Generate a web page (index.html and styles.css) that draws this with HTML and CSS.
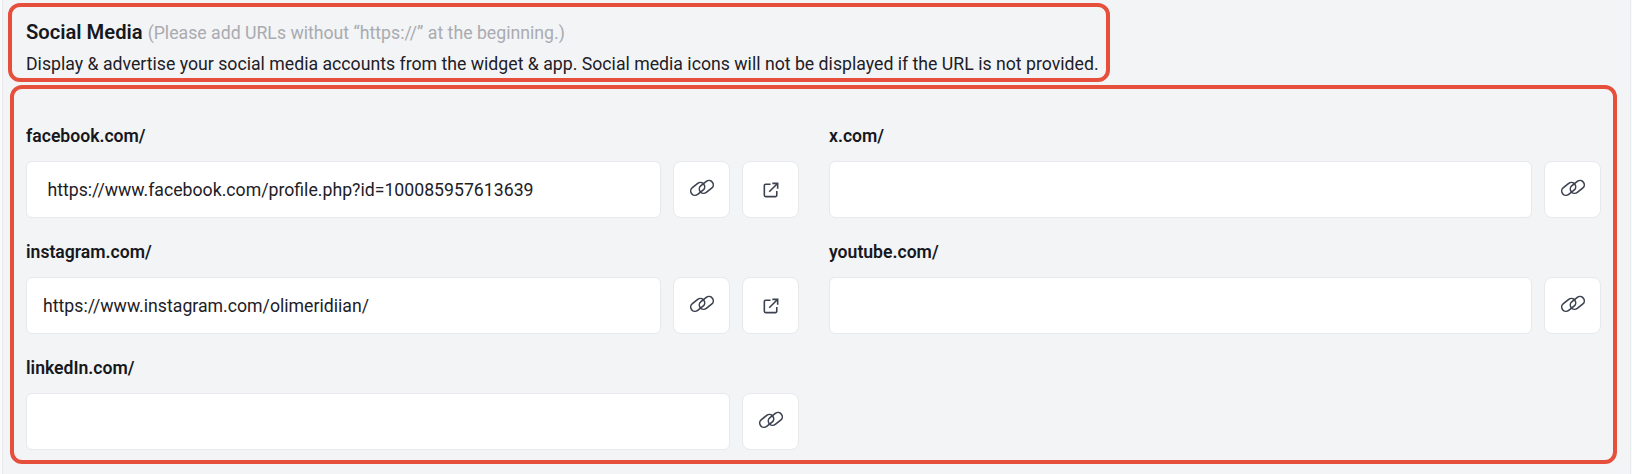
FILE: index.html
```html
<!DOCTYPE html>
<html lang="en">
<head>
  <meta charset="UTF-8">
  <meta name="viewport" content="width=device-width, initial-scale=1.0">
  <title>Social Media</title>
  <link rel="stylesheet" href="styles.css">
</head>
<body>
  <svg class="defs" width="0" height="0" aria-hidden="true">
    <symbol id="icon-link" viewBox="0 0 26 20">
      <g fill="none" stroke="currentColor" stroke-width="1.6">
        <rect x="1" y="6.6" width="15.4" height="8.6" rx="4.3" transform="rotate(-38 8.7 10.9)"/>
        <rect x="9.6" y="4.6" width="15.4" height="8.6" rx="4.3" transform="rotate(-38 17.3 8.9)"/>
      </g>
    </symbol>
    <symbol id="icon-open" viewBox="0 0 18 18">
      <g fill="none" stroke="currentColor" stroke-width="1.8">
        <path d="M8.5 2.5H3a1.5 1.5 0 0 0-1.5 1.5v11A1.5 1.5 0 0 0 3 16.500h11a1.500 1.500 0 0 0 1.500-1.500V10"/>
        <path d="M7 11 16 2M10.500 1.500h6v6"/>
      </g>
    </symbol>
  </svg>

  <div class="page">
    <div class="head">
      <h2>Social Media <span>(Please add URLs without “https://” at the beginning.)</span></h2>
      <p>Display &amp; advertise your social media accounts from the widget &amp; app. Social media icons will not be displayed if the URL is not provided.</p>
    </div>

    <div class="fields">
      <div class="field">
        <label>facebook.com/</label>
        <div class="row">
          <input type="text" value=" https://www.facebook.com/profile.php?id=100085957613639">
          <button class="btn"><svg class="ico-link"><use href="#icon-link"/></svg></button>
          <button class="btn"><svg class="ico-open"><use href="#icon-open"/></svg></button>
        </div>
      </div>
      <div class="field">
        <label>x.com/</label>
        <div class="row">
          <input type="text">
          <button class="btn"><svg class="ico-link"><use href="#icon-link"/></svg></button>
        </div>
      </div>
      <div class="field">
        <label>instagram.com/</label>
        <div class="row">
          <input type="text" value="https://www.instagram.com/olimeridiian/">
          <button class="btn"><svg class="ico-link"><use href="#icon-link"/></svg></button>
          <button class="btn"><svg class="ico-open"><use href="#icon-open"/></svg></button>
        </div>
      </div>
      <div class="field">
        <label>youtube.com/</label>
        <div class="row">
          <input type="text">
          <button class="btn"><svg class="ico-link"><use href="#icon-link"/></svg></button>
        </div>
      </div>
      <div class="field">
        <label>linkedIn.com/</label>
        <div class="row">
          <input type="text">
          <button class="btn"><svg class="ico-link"><use href="#icon-link"/></svg></button>
        </div>
      </div>
    </div>
  </div>
</body>
</html>
```

FILE: styles.css
```css
* {
  box-sizing: border-box;
}
html, body {
  height: 100%;
}
body {
  margin: 0;
  background-color: #fbfbfc;
  font-family: Roboto, Arial, sans-serif;
  color: #1d2026;
}
.defs {
  position: absolute;
}
.page {
  height: 100%;
  margin: 0 1px 0 2px;
  padding: 3px 8px 0 5px;
  background-color: #f3f4f6;
  border-left: 1px solid #e8e9ec;
  border-right: 1px solid #e8e9ec;
}
.head {
  width: 1102px;
  height: 79px;
  padding: 13px 14px 0;
  border: 4px solid #e74f3d;
  border-radius: 12px;
}
.head h2 {
  margin: 0;
  font-size: 20.2px;
  font-weight: 600;
  line-height: 24px;
  color: #16181d;
}
.head h2 span {
  font-size: 17.7px;
  font-weight: 400;
  color: #a9abb0;
}
.head p {
  margin: 8px 0 0;
  font-size: 17.7px;
  line-height: 22px;
  white-space: nowrap;
}
.fields {
  display: grid;
  grid-template-columns: 773px 772px;
  column-gap: 30px;
  width: 1607px;
  height: 379px;
  margin: 3px 0 0 2px;
  padding: 29px 12px 0 12px;
  border: 4px solid #e74f3d;
  border-radius: 12px;
}
.field {
  height: 116px;
}
.field label {
  display: block;
  height: 43px;
  padding-top: 8px;
  font-size: 17.6px;
  font-weight: 600;
  line-height: 20px;
  color: #16181d;
}
.row {
  display: flex;
  gap: 12px;
}
input {
  flex: 1;
  min-width: 0;
  height: 57px;
  padding: 0 16px;
  border: 1px solid #e8e9ec;
  border-radius: 6px;
  background-color: #fff;
  font-family: inherit;
  font-size: 17.7px;
  color: #1d2026;
}
.btn {
  display: flex;
  align-items: center;
  justify-content: center;
  width: 57px;
  height: 57px;
  padding: 0;
  border: 1px solid #e8e9ec;
  border-radius: 8px;
  background-color: #fff;
  color: #3c4250;
  cursor: pointer;
}
.ico-link {
  width: 26px;
  height: 20px;
  margin-bottom: 3px;
}
.ico-open {
  width: 16px;
  height: 16px;
}
```
